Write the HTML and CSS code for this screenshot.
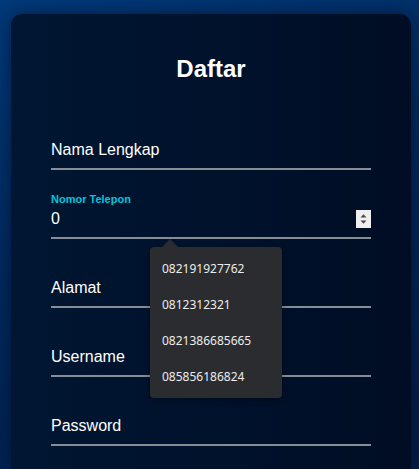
FILE: index.html
```html
<!DOCTYPE html>
<html lang="id">
<head>
<meta charset="utf-8">
<title>Daftar</title>
<link rel="stylesheet" href="styles.css">
</head>
<body>
<main class="card">
  <h1 class="title">Daftar</h1>
  <form class="form">
    <div class="field">
      <div class="input-row"><span class="placeholder">Nama Lengkap</span></div>
    </div>
    <div class="field field-phone">
      <label class="float-label">Nomor Telepon</label>
      <div class="input-row">
        <span class="value">0</span>
        <span class="spinner">
          <svg width="15" height="18" viewBox="0 0 15 18"><rect width="15" height="18" fill="#efefef"/><path d="M4.5 7.5 L7.5 4.3 L10.5 7.5 Z" fill="#4a4a4a"/><path d="M4.5 10.5 L7.5 13.7 L10.5 10.5 Z" fill="#4a4a4a"/></svg>
        </span>
      </div>
      <ul class="suggest">
        <li>082191927762</li>
        <li>0812312321</li>
        <li>0821386685665</li>
        <li>085856186824</li>
      </ul>
    </div>
    <div class="field">
      <div class="input-row"><span class="placeholder">Alamat</span></div>
    </div>
    <div class="field">
      <div class="input-row"><span class="placeholder">Username</span></div>
    </div>
    <div class="field">
      <div class="input-row"><span class="placeholder">Password</span></div>
    </div>
  </form>
</main>
</body>
</html>
```
FILE: styles.css
```css
* { box-sizing: border-box; }
html, body { height: 100%; }
body {
  margin: 0;
  padding: 14px 8px 0 11px;
  overflow: hidden;
  background: linear-gradient(160deg, #003a7a 0%, #002a5e 45%, #001d48 100%);
  font-family: "Liberation Sans", Arial, sans-serif;
  color: #fff;
}
.card {
  width: 400px;
  height: 455px;
  border-radius: 11px 11px 0 0;
  background: linear-gradient(90deg, #001632 0%, #00112b 60%, #000d24 100%);
  box-shadow: 0 0 18px rgba(0, 8, 30, 0.55);
  padding: 41px 40px 0 40px;
}
.title {
  margin: 0 0 18px 0;
  text-align: center;
  font-size: 24px;
  line-height: 28px;
  font-weight: bold;
}
.form {
  display: flex;
  flex-direction: column;
  margin: 0;
}
.field {
  position: relative;
  height: 69px;
  border-bottom: 2px solid #878c95;
  display: flex;
  flex-direction: column;
  justify-content: flex-end;
  padding-bottom: 8px;
}
.input-row {
  height: 20px;
  display: flex;
  align-items: center;
  justify-content: space-between;
  font-size: 16px;
  line-height: 20px;
}
.placeholder, .value { color: #fff; }
.float-label {
  font-size: 11px;
  line-height: 13px;
  font-weight: bold;
  color: #00c5dd;
  margin-bottom: 3px;
}
.spinner { display: flex; }
.suggest {
  position: absolute;
  left: 99px;
  top: 77px;
  width: 132px;
  margin: 0;
  padding: 4px 0 3px 0;
  list-style: none;
  background: #2b2c2f;
  border-radius: 4px;
  box-shadow: 0 2px 6px rgba(0, 0, 0, 0.35);
  z-index: 2;
  font-family: "Noto Sans", "Open Sans", sans-serif;
  font-size: 12px;
  color: #ececec;
}
.suggest::before {
  content: "";
  position: absolute;
  left: 12px;
  top: -8px;
  border-left: 8px solid transparent;
  border-right: 8px solid transparent;
  border-bottom: 8px solid #2b2c2f;
}
.suggest li {
  height: 36px;
  line-height: 36px;
  padding-left: 12px;
}
```
